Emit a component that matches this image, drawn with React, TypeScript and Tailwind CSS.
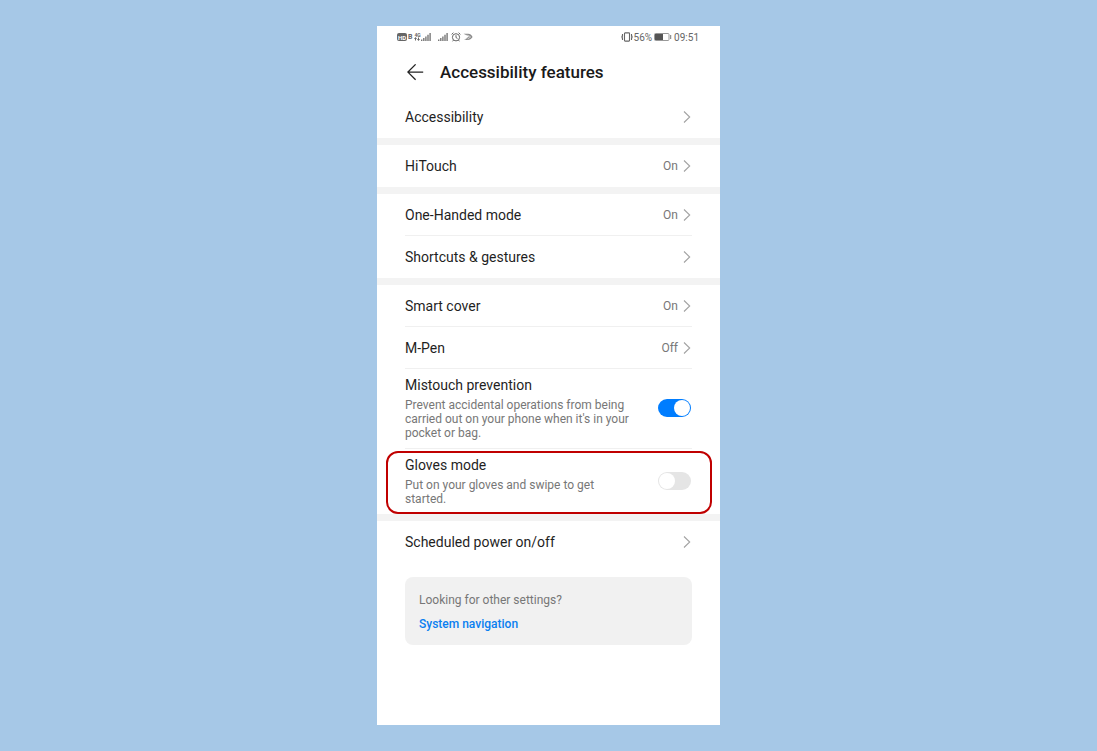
import { useState } from "react";
import type { ReactNode } from "react";

function Chevron() {
  return (
    <svg className="h-3 w-2 shrink-0" viewBox="0 0 8 12" fill="none" stroke="#a3a3a3" strokeWidth="1.1" aria-hidden="true">
      <path d="M1 0.5 6.7 6 1 11.5" />
    </svg>
  );
}

function SignalBars() {
  return (
    <svg className="h-2 w-[10px]" viewBox="0 0 10 8" fill="#777" aria-hidden="true">
      <path d="M0 6.5h1.4V8H0zM2.1 5h1.4v3H2.1zM4.2 3.4h1.4V8H4.2zM6.3 1.7h1.4V8H6.3zM8.4 0h1.4v8H8.4z" />
    </svg>
  );
}

function StatusBar() {
  return (
    <div className="flex h-[22px] items-center justify-between pr-[21px] pl-[20px] text-[10px] text-[#666]">
      <div className="flex items-center">
        <span className="flex h-2 w-[10px] items-center justify-center rounded-[2px] bg-[#666] text-[6px] font-bold text-white">HD</span>
        <span className="ml-px text-[7px] leading-2 font-bold">B</span>
        <span className="ml-[2px] flex flex-col text-[5px] leading-1 font-bold">
          <span>4G</span>
          <svg className="h-1 w-[6px]" viewBox="0 0 6 4" fill="#666" aria-hidden="true">
            <path d="M1.5 0 3 2H2v1.5H1V2H0zM4.5 4 3 2h1V.5h1V2h1z" />
          </svg>
        </span>
        <SignalBars />
        <span className="ml-[7px] flex">
          <SignalBars />
        </span>
        <svg className="ml-[3px] h-[10px] w-[10px]" viewBox="0 0 10 10" fill="none" stroke="#666" strokeWidth="1" aria-hidden="true">
          <circle cx="5" cy="5.3" r="3.6" />
          <path d="M5 3.2v2.4l1.5.8M.6 2.4 2.4.7M7.6.7l1.8 1.7M2.5 8.1 1.6 9.3M7.5 8.1l.9 1.2" />
        </svg>
        <svg className="ml-[2px] h-2 w-[10px]" viewBox="0 0 10 8" aria-hidden="true">
          <path d="M.6.8h4.6c1.9 0 3.2 1.2 4.4 3.1C8.2 5.9 6.8 6.9 4.8 6.9H1l3.6-1.5H2.4l3.8-1.6z" fill="#8a8a8a" />
          <path d="M2 2.3h3.2L7.6 4 4.6 6" fill="none" stroke="#fff" strokeWidth=".6" />
        </svg>
      </div>
      <div className="flex items-center">
        <svg className="h-[10px] w-3" viewBox="0 0 12 10" fill="none" stroke="#666" strokeWidth="1.1" aria-hidden="true">
          <rect x="3.5" y=".9" width="5" height="8.2" rx=".6" />
          <path d="M1.5 2v1.5l-.6.7.6.8-.6.8.6.7V8M10.5 2v1.5l.6.7-.6.8.6.8-.6.7V8" />
        </svg>
        <span className="ml-px">56%</span>
        <svg className="mx-[2px] h-2 w-[18px]" viewBox="0 0 18 8" aria-hidden="true">
          <rect x=".5" y=".5" width="14.5" height="7" rx="1" fill="none" stroke="#999" />
          <path d="M1 1h8v6H1z" fill="#555" />
          <path d="M16.2 2h1v4h-1z" fill="#777" />
        </svg>
        <span>09:51</span>
      </div>
    </div>
  );
}

function LinkRow({ label, value }: { label: string; value?: string }) {
  return (
    <button type="button" className="flex h-[42px] w-full items-start justify-between pt-[11px] pr-px text-left">
      <span className="text-[14px] leading-5 text-[#1f1f1f]">{label}</span>
      <span className="flex h-5 items-center gap-[5px] text-[12px] leading-5 text-[#777]">
        {value}
        <Chevron />
      </span>
    </button>
  );
}

function SwitchRow({ id, label, description, initial }: { id: string; label: string; description: string; initial: boolean }) {
  const [on, setOn] = useState(initial);
  return (
    <div className="flex items-center justify-between gap-4 pt-[6px] pr-px pb-2">
      <label htmlFor={id} className="max-w-[232px]">
        <span className="block text-[14px] leading-5 text-[#1f1f1f]">{label}</span>
        <span className="mt-[3px] block text-[12px] leading-[14px] text-[#777]">{description}</span>
      </label>
      <input
        id={id}
        type="checkbox"
        role="switch"
        checked={on}
        onChange={() => setOn(!on)}
        className="flex h-[18px] w-[33px] shrink-0 cursor-pointer appearance-none items-center rounded-full bg-[#e5e5e5] px-px before:size-4 before:rounded-full before:bg-white checked:justify-end checked:bg-[#007dff]"
      />
    </div>
  );
}

function Section({ children }: { children: ReactNode }) {
  return <section className="divide-y divide-[#f0f0f0] px-[28px]">{children}</section>;
}

function Band() {
  return <div className="h-[7px] bg-[#f3f3f3]" />;
}

export default function App() {
  return (
    <div className="flex min-h-screen justify-center bg-[#a6c8e7] py-[26px] font-['Roboto',sans-serif]">
      <main className="w-full max-w-[343px] bg-white">
        <StatusBar />
        <header className="flex h-12 items-center gap-4 pl-[30px]">
          <button type="button" aria-label="Back">
            <svg className="size-[17px]" viewBox="0 0 17 17" fill="none" stroke="#222" strokeWidth="1.3" aria-hidden="true">
              <path d="M16.2 8.1H1M8.6.4.9 8.1l7.7 7.7" />
            </svg>
          </button>
          <h1 className="text-[17px] leading-6 font-medium text-[#1a1a1a]">Accessibility features</h1>
        </header>
        <Section>
          <LinkRow label="Accessibility" />
        </Section>
        <Band />
        <Section>
          <LinkRow label="HiTouch" value="On" />
        </Section>
        <Band />
        <Section>
          <LinkRow label="One-Handed mode" value="On" />
          <LinkRow label="Shortcuts & gestures" />
        </Section>
        <Band />
        <Section>
          <LinkRow label="Smart cover" value="On" />
          <LinkRow label="M-Pen" value="Off" />
          <SwitchRow
            id="mistouch"
            label="Mistouch prevention"
            description="Prevent accidental operations from being carried out on your phone when it's in your pocket or bag."
            initial={true}
          />
          <div className="relative">
            <SwitchRow id="gloves" label="Gloves mode" description="Put on your gloves and swipe to get started." initial={false} />
            <div className="pointer-events-none absolute top-[2px] -right-5 bottom-0 -left-[19px] rounded-xl border-2 border-[#c00000]" />
          </div>
        </Section>
        <Band />
        <Section>
          <LinkRow label="Scheduled power on/off" />
        </Section>
        <aside className="mx-[28px] mt-[14px] flex flex-col items-start gap-[6px] rounded-lg bg-[#f1f1f1] px-[14px] pt-[14px] pb-3 text-[12px] leading-[18px]">
          <p className="text-[#777]">Looking for other settings?</p>
          <a href="#system-navigation" className="font-medium text-[#0a7ff0]">
            System navigation
          </a>
        </aside>
      </main>
    </div>
  );
}
